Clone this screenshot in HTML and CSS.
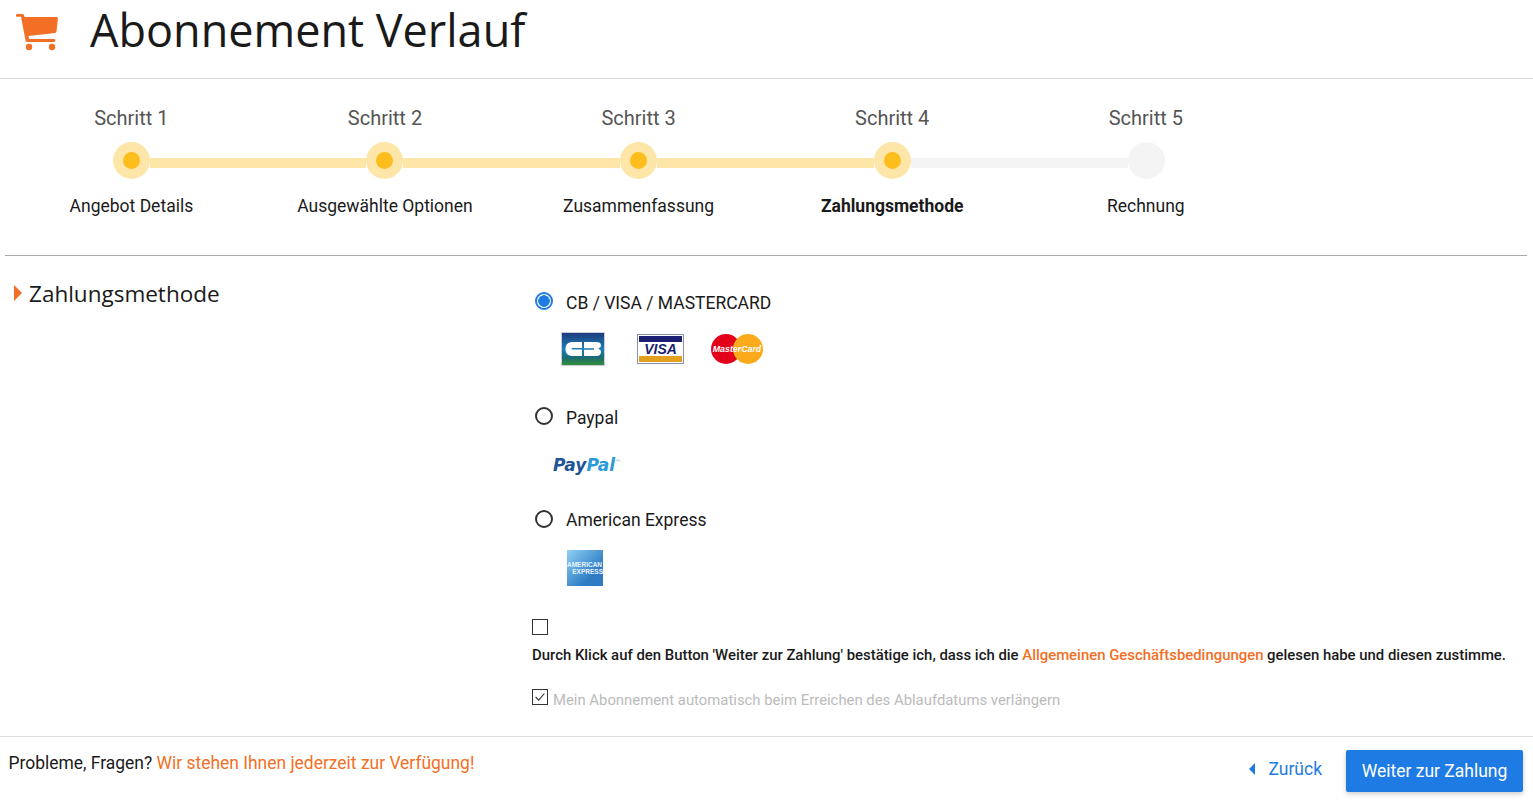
FILE: index.html
```html
<!DOCTYPE html>
<html lang="de">
  <head>
    <meta charset="UTF-8" />
    <meta name="viewport" content="width=device-width, initial-scale=1.0" />
    <title>Abonnement Verlauf</title>
    <link rel="stylesheet" href="styles.css">
  </head>
  <body>
    <header class="page-head">
      <svg class="cart" viewBox="0 0 42 37" width="42" height="37">
        <path d="M1 0H6.500c.8 0 1.300.4 1.500 1.200L8.500 3H40.500c1 0 1.500.7 1.400 1.600L40.500 17.500c-.1.800-.6 1.300-1.400 1.400L12.500 22l.6 3H38c.8 0 1.300.6 1.300 1.400S38.800 27.900 38 27.900H11c-.7 0-1.200-.5-1.400-1.200L5 2.800H1C.4 2.800 0 2.200 0 1.400S.4 0 1 0z" fill="#f26f25"/>
        <circle cx="13" cy="33" r="3.200" fill="#f26f25"/>
        <circle cx="36" cy="33" r="3.200" fill="#f26f25"/>
      </svg>
      <h1>Abonnement Verlauf</h1>
    </header>

    <section class="steps">
      <div class="step-row">
        <span class="step-title">Schritt 1</span>
        <span class="step-title">Schritt 2</span>
        <span class="step-title">Schritt 3</span>
        <span class="step-title">Schritt 4</span>
        <span class="step-title">Schritt 5</span>
      </div>
      <div class="track">
        <span class="node done"><i></i></span>
        <span class="bar done"></span>
        <span class="node done"><i></i></span>
        <span class="bar done"></span>
        <span class="node done"><i></i></span>
        <span class="bar done"></span>
        <span class="node done"><i></i></span>
        <span class="bar"></span>
        <span class="node"></span>
      </div>
      <div class="step-row">
        <span class="step-name">Angebot Details</span>
        <span class="step-name">Ausgewählte Optionen</span>
        <span class="step-name">Zusammenfassung</span>
        <span class="step-name current">Zahlungsmethode</span>
        <span class="step-name">Rechnung</span>
      </div>
    </section>

    <main class="payment">
      <h2 class="section-title">Zahlungsmethode</h2>
      <form class="methods">
        <label class="method drop">
          <span class="radio checked"></span>
          <span>CB / VISA / MASTERCARD</span>
        </label>
        <div class="logos cards">
          <svg class="logo-cb" viewBox="0 0 44 34" width="44" height="34">
            <defs>
              <linearGradient id="cbBg" x1="0" y1="0" x2="0" y2="1">
                <stop offset="0" stop-color="#1d3a7c"/>
                <stop offset="0.5" stop-color="#1d7fb5"/>
                <stop offset="0.75" stop-color="#1c6a78"/>
                <stop offset="0.95" stop-color="#2f8a3e"/>
              </linearGradient>
            </defs>
            <rect x="0.500" y="0.500" width="43" height="33" fill="url(#cbBg)" stroke="#c9cbd6"/>
            <path d="M12 10h9v6h-9c-1 0-1.500.3-1.500.8s.5.800 1.500.800h9V24h-9c-5 0-7.500-2.500-7.500-7s2.500-7 7.500-7z" fill="#fff"/>
            <path d="M23 10h12c3 0 5 1.200 5 3.200 0 1.500-1 2.600-2.500 3.100v.8c1.700.4 2.500 1.500 2.500 3 0 2.500-2 3.900-5 3.900H23v-6.200h10v-1.600H23z" fill="#fff"/>
          </svg>
          <svg class="logo-visa" viewBox="0 0 47 30" width="47" height="30">
            <rect x="0.500" y="0.500" width="46" height="29" fill="#fff" stroke="#8a8fae"/>
            <rect x="2" y="2" width="43" height="6" fill="#1a1f71"/>
            <rect x="2" y="22" width="43" height="6" fill="#e2a01e"/>
            <text class="visa-text" x="23.500" y="20">VISA</text>
          </svg>
          <svg class="logo-mc" viewBox="0 0 52 30" width="52" height="30">
            <circle cx="15" cy="15" r="15" fill="#e2001a"/>
            <circle cx="37" cy="15" r="15" fill="#fbaa1c"/>
            <text class="mc-text" x="26" y="18">MasterCard</text>
          </svg>
        </div>

        <label class="method drop">
          <span class="radio"></span>
          <span>Paypal</span>
        </label>
        <div class="logos paypal">
          <span class="pp-dark">Pay</span><span class="pp-light">Pal</span><span class="pp-tm">™</span>
        </div>

        <label class="method">
          <span class="radio"></span>
          <span>American Express</span>
        </label>
        <div class="logos amex">
          <span class="amex-box">
            <span>AMERICAN</span>
            <span class="amex-low">EXPRESS</span>
          </span>
        </div>

        <span class="check"></span>
        <p class="terms">
          Durch Klick auf den Button 'Weiter zur Zahlung' bestätige ich, dass ich die
          <a href="#">Allgemeinen Geschäftsbedingungen</a>
          gelesen habe und diesen zustimme.
        </p>

        <label class="renew">
          <span class="check small">
            <svg viewBox="0 0 16 16" width="14" height="14"><path d="M3 8l3.500 3.500L13 4" fill="none" stroke="#333" stroke-width="1.300"/></svg>
          </span>
          <span>Mein Abonnement automatisch beim Erreichen des Ablaufdatums verlängern</span>
        </label>
      </form>
    </main>

    <footer class="page-foot">
      <p>Probleme, Fragen? <a href="#">Wir stehen Ihnen jederzeit zur Verfügung!</a></p>
      <div class="actions">
        <a class="back" href="#"><span class="back-arrow"></span>Zurück</a>
        <button class="next" type="button">Weiter zur Zahlung</button>
      </div>
    </footer>
  </body>
</html>
```

FILE: styles.css
```css
* {
  margin: 0;
  padding: 0;
  box-sizing: border-box;
}
body {
  font-family: Roboto, "Liberation Sans", sans-serif;
  font-size: 17.500px;
  color: #1a1a1a;
  background-color: #fff;
  overflow: hidden;
}
a {
  color: #f26f25;
  text-decoration: none;
}

/* header */
.page-head {
  height: 79px;
  display: flex;
  align-items: flex-start;
  border-bottom: 1px solid #ddd;
  padding: 14px 0 0 16px;
}
.cart {
  display: block;
  flex: none;
}
.page-head h1 {
  font-family: "Open Sans", sans-serif;
  font-size: 45px;
  font-weight: 400;
  line-height: 60px;
  margin: -14px 0 0 32px;
}

/* steps */
.steps {
  width: 1268px;
  margin-left: 4.600px;
  height: 176px;
  padding-top: 27px;
}
.step-row {
  display: grid;
  grid-template-columns: repeat(5, 1fr);
  text-align: center;
}
.step-title {
  color: #555;
  font-size: 20px;
  line-height: 24px;
}
.track {
  display: flex;
  align-items: flex-start;
  margin: 12px 108px 15px;
}
.node {
  width: 37px;
  height: 37px;
  flex: none;
  border-radius: 50%;
  background-color: #f4f4f4;
  display: flex;
  justify-content: center;
  align-items: center;
}
.node.done {
  background-color: #fde6a8;
}
.node i {
  width: 17px;
  height: 17px;
  border-radius: 50%;
  background-color: #fdbd1c;
}
.bar {
  flex: 1;
  height: 10px;
  margin-top: 16px;
  background-color: #f4f4f4;
}
.bar.done {
  background-color: #fde6a8;
}
.step-name {
  line-height: 24px;
}
.step-name.current {
  font-weight: 700;
}

/* payment */
.payment {
  margin: 0 6px 0 5px;
  height: 481px;
  border-top: 1px solid #aaa;
  display: grid;
  grid-template-columns: 527px 1fr;
}
.section-title {
  font-family: "Open Sans", sans-serif;
  font-size: 22.500px;
  font-weight: 400;
  line-height: 32px;
  margin-top: 22px;
  padding-left: 24px;
  position: relative;
}
.section-title::before {
  content: "";
  position: absolute;
  left: 9px;
  top: 7px;
  border-style: solid;
  border-width: 8px 0 8px 8px;
  border-color: transparent transparent transparent #f26f25;
}
.methods {
  padding-top: 34px;
}
.method {
  display: flex;
  align-items: center;
  gap: 13px;
  height: 24px;
  padding-left: 3px;
}
.method.drop span:last-child {
  margin-top: 2px;
}
.radio {
  width: 18px;
  height: 18px;
  margin-top: -3px;
  border: 2px solid #333;
  border-radius: 50%;
  flex: none;
}
.radio.checked {
  border-color: #1e7be3;
  background: radial-gradient(circle, #1e7be3 0 5.500px, #fff 6px);
}
.logos {
  display: flex;
  align-items: center;
}
.cards {
  height: 37px;
  margin: 16px 0 38px 29px;
}
.logo-cb,
.logo-visa,
.logo-mc {
  display: block;
}
.logo-visa {
  margin-left: 32px;
}
.logo-mc {
  margin-left: 27px;
}
.visa-text {
  font: italic 700 14px "Liberation Sans", sans-serif;
  fill: #1a1f71;
  text-anchor: middle;
}
.mc-text {
  font: italic 700 8.800px "Liberation Sans", sans-serif;
  fill: #fff;
  text-anchor: middle;
}
.paypal {
  height: 24px;
  margin: 24px 0 31px 21px;
  font: italic 700 17px "DejaVu Sans", sans-serif;
}
.pp-dark {
  color: #1f5597;
}
.pp-light {
  color: #2b9ad9;
}
.pp-tm {
  align-self: flex-start;
  margin-top: 5px;
  font-size: 6px;
  font-style: normal;
  font-weight: 400;
  color: #888;
}
.amex {
  height: 36px;
  margin: 18px 0 33px 35px;
}
.amex-box {
  width: 36px;
  height: 36px;
  display: flex;
  flex-direction: column;
  justify-content: center;
  background: linear-gradient(135deg, #8fd0f5, #2f7cc4 70%);
  color: #e8f4fc;
  font: 700 6.500px/7px "Liberation Sans", sans-serif;
  text-align: left;
}
.amex-low {
  text-align: right;
}
.check {
  display: block;
  width: 16px;
  height: 16px;
  border: 1px solid #333;
}
.terms {
  font-size: 14.900px;
  font-weight: 500;
  line-height: 20px;
  margin-top: 10px;
}
.renew {
  display: flex;
  align-items: center;
  gap: 5px;
  margin-top: 26px;
  font-size: 14.870px;
  color: #bbb;
}
.check.small {
  margin-top: -6px;
  flex: none;
}
.check.small svg {
  display: block;
}

/* footer */
.page-foot {
  height: 68px;
  border-top: 1px solid #ddd;
  padding: 13px 10px 0 8.600px;
  display: flex;
  justify-content: space-between;
  align-items: flex-start;
}
.page-foot p {
  font-size: 17.450px;
  line-height: 26px;
}
.actions {
  display: flex;
  align-items: center;
  gap: 24px;
}
.back {
  color: #1e7be3;
  display: flex;
  align-items: center;
  gap: 13px;
  margin-top: -4px;
}
.back-arrow {
  border-style: solid;
  border-width: 6px 6px 6px 0;
  border-color: transparent #1e7be3 transparent transparent;
}
.next {
  width: 177px;
  height: 42px;
  border: none;
  border-radius: 2px;
  background-color: #1e7be3;
  color: #fff;
  font-family: inherit;
  font-size: 17.500px;
  box-shadow: 0 2px 5px rgba(0, 0, 0, 0.2);
}
```
